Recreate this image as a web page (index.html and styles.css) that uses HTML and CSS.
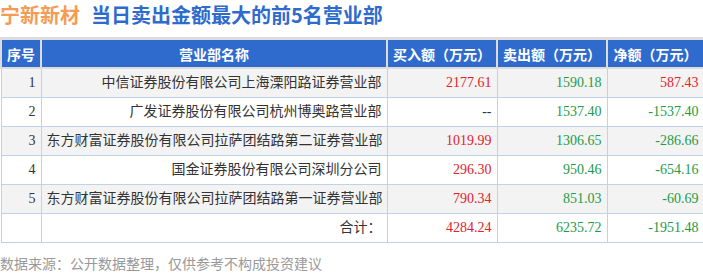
FILE: index.html
```html
<!DOCTYPE html>
<html lang="zh-CN">
<head>
    <meta charset="UTF-8">
    <title>宁新新材 当日卖出金额最大的前5名营业部</title>
    <link rel="stylesheet" href="styles.css">
</head>
<body>
    <div class="page">
        <h1 class="title"><span class="stock">宁新新材</span><span class="topic">当日卖出金额最大的前5名营业部</span></h1>

        <table class="rank">
            <colgroup>
                <col class="c-no">
                <col class="c-name">
                <col class="c-buy">
                <col class="c-sell">
                <col class="c-net">
            </colgroup>
            <thead>
                <tr>
                    <th>序号</th>
                    <th>营业部名称</th>
                    <th>买入额（万元）</th>
                    <th>卖出额（万元）</th>
                    <th>净额（万元）</th>
                </tr>
            </thead>
            <tbody>
                <tr class="odd">
                    <td>1</td>
                    <td>中信证券股份有限公司上海溧阳路证券营业部</td>
                    <td class="up">2177.61</td>
                    <td class="down">1590.18</td>
                    <td class="up">587.43</td>
                </tr>
                <tr>
                    <td>2</td>
                    <td>广发证券股份有限公司杭州博奥路营业部</td>
                    <td>--</td>
                    <td class="down">1537.40</td>
                    <td class="down">-1537.40</td>
                </tr>
                <tr class="odd">
                    <td>3</td>
                    <td>东方财富证券股份有限公司拉萨团结路第二证券营业部</td>
                    <td class="up">1019.99</td>
                    <td class="down">1306.65</td>
                    <td class="down">-286.66</td>
                </tr>
                <tr>
                    <td>4</td>
                    <td>国金证券股份有限公司深圳分公司</td>
                    <td class="up">296.30</td>
                    <td class="down">950.46</td>
                    <td class="down">-654.16</td>
                </tr>
                <tr class="odd">
                    <td>5</td>
                    <td>东方财富证券股份有限公司拉萨团结路第一证券营业部</td>
                    <td class="up">790.34</td>
                    <td class="down">851.03</td>
                    <td class="down">-60.69</td>
                </tr>
                <tr>
                    <td></td>
                    <td>合计：</td>
                    <td class="up">4284.24</td>
                    <td class="down">6235.72</td>
                    <td class="down">-1951.48</td>
                </tr>
            </tbody>
        </table>

        <p class="source">数据来源：公开数据整理，仅供参考不构成投资建议</p>
    </div>
</body>
</html>
```

FILE: styles.css
```css
body {
    margin: 0;
    padding: 0;
    background: #fff;
    font-family: "Noto Sans CJK SC", sans-serif;
    overflow: hidden;
}
.page {
    width: 703px;
    height: 274px;
}
.title {
    margin: 0;
    font-size: 20px;
    line-height: 29px;
    font-weight: bold;
    white-space: nowrap;
}
.stock {
    color: #f59b56;
    margin-right: 11px;
}
.topic {
    color: #2e6bcd;
}
.rank {
    margin-top: 8px;
    width: 703px;
    border-collapse: collapse;
    table-layout: fixed;
    font-size: 14px;
    color: #333;
}
.c-no { width: 40px; }
.c-name { width: 346px; }
.c-buy { width: 110px; }
.c-sell { width: 110px; }
.c-net { width: 97px; }
.rank th {
    background: #2f6bcd;
    color: #fff;
    font-weight: bold;
    height: 27px;
    padding: 0;
    border: 2px solid #dcdcdc;
    border-top-width: 3px;
    line-height: 20px;
    text-align: center;
}
.rank td {
    height: 28px;
    padding: 0 5px;
    border: 1px solid #bcd3ea;
    text-align: right;
    white-space: nowrap;
    font-family: "Liberation Serif", "Noto Sans CJK SC", serif;
    line-height: 20px;
}
.rank tr.odd td {
    background: #f3f3f3;
}
.rank td.up {
    color: #e3212b;
}
.rank td.down {
    color: #1e9b48;
}
.source {
    margin: 11px 0 0;
    font-size: 14px;
    line-height: 18px;
    color: #999;
}
```
